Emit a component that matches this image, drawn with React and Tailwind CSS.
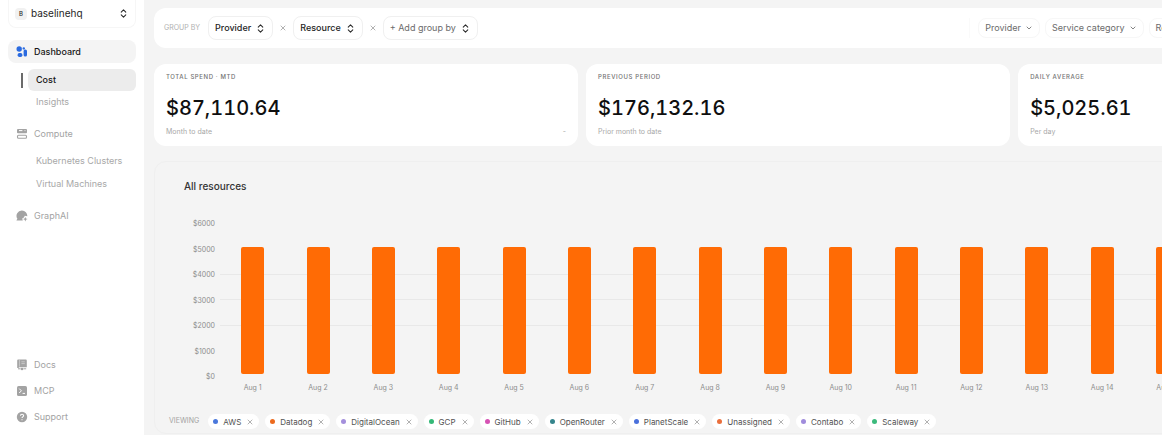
import React from "react";
import { ChevronDown, ChevronsUpDown, X } from "lucide-react";

const days = Array.from({ length: 18 }, (_, i) => ({ label: `Aug ${i + 1}`, spend: 5025.61 }));
const ticks = [6000, 5000, 4000, 3000, 2000, 1000, 0];

const stats = [
  { title: "Total spend · MTD", value: "$87,110.64", note: "Month to date", delta: "-" },
  { title: "Previous period", value: "$176,132.16", note: "Prior month to date" },
  { title: "Daily average", value: "$5,025.61", note: "Per day" },
];

const providers = [
  { name: "AWS", dot: "bg-[#4a78dc]" },
  { name: "Datadog", dot: "bg-[#ec6a1e]" },
  { name: "DigitalOcean", dot: "bg-[#a48fdc]" },
  { name: "GCP", dot: "bg-[#34b877]" },
  { name: "GitHub", dot: "bg-[#d652b4]" },
  { name: "OpenRouter", dot: "bg-[#35858c]" },
  { name: "PlanetScale", dot: "bg-[#4a70dc]" },
  { name: "Unassigned", dot: "bg-[#ea6f3c]" },
  { name: "Contabo", dot: "bg-[#a08cdc]" },
  { name: "Scaleway", dot: "bg-[#3cba7c]" },
];

function DashboardIcon() {
  return (
    <svg viewBox="0 0 12 12" className="size-3 shrink-0" fill="#2b6be0" aria-hidden="true">
      <circle cx="3.2" cy="3" r="2.7" />
      <rect x="6.6" y="1.2" width="2.4" height="2.4" rx="1.2" />
      <rect x="1.6" y="7" width="4.8" height="4" rx="1.8" />
      <rect x="7.6" y="3.4" width="3.4" height="7.2" rx="1.6" />
    </svg>
  );
}

function ComputeIcon() {
  return (
    <svg viewBox="0 0 12 12" className="size-3 shrink-0" aria-hidden="true">
      <rect x="1" y="1" width="10" height="4.2" rx="1" fill="#a3a3a3" />
      <path d="M3 2.6h3.4M8.6 2.6h.8" stroke="#fff" strokeWidth="1" />
      <rect x="1.5" y="7.2" width="9" height="3" rx="1" fill="none" stroke="#a3a3a3" strokeWidth="1.1" />
    </svg>
  );
}

function GraphIcon() {
  return (
    <svg viewBox="0 0 12 12" className="size-3 shrink-0" aria-hidden="true">
      <path d="M6 .6a5.3 5.3 0 0 1 5.3 5.6L8.8 5.8l-.9 1.7-1.7.9.6 2.2H.9c-.4 0-.5-.4-.3-.6l.8-1.2A5.3 5.3 0 0 1 6 .6z" fill="#a3a3a3" />
      <path d="M9.3 6.9l.7 1.5 1.6.7-1.6.7-.7 1.6-.7-1.6L7 9.1l1.6-.7z" fill="#a3a3a3" />
    </svg>
  );
}

function DocsIcon() {
  return (
    <svg viewBox="0 0 12 12" className="size-3 shrink-0" aria-hidden="true">
      <path d="M2.4.6h7.2c.8 0 1.2.4 1.2 1.2v6.4H3.6c-.7 0-1 .4-1 .8H1.2V1.8C1.2 1 1.6.6 2.4.6z" fill="#a3a3a3" />
      <path d="M3.4 1v6.6M5.4 2.8h3.4M5.4 4.6h3.4" stroke="#fff" strokeWidth=".4" />
      <path d="M2 9.8h2.6M7.4 9.8h2.8" stroke="#a3a3a3" strokeWidth="1" />
      <circle cx="6" cy="10" r="1.3" fill="#a3a3a3" />
    </svg>
  );
}

function TerminalIcon() {
  return (
    <svg viewBox="0 0 12 12" className="size-3 shrink-0" aria-hidden="true">
      <rect x="1" y="1" width="10" height="10" rx="1.6" fill="#a3a3a3" />
      <path d="M3.2 3.6l2.2 2.2-2.2 2.2M6.6 8.4h2.4" stroke="#fff" strokeWidth="1" fill="none" />
    </svg>
  );
}

function SupportIcon() {
  return (
    <svg viewBox="0 0 12 12" className="size-3 shrink-0" aria-hidden="true">
      <circle cx="6" cy="6" r="5.2" fill="#a3a3a3" />
      <path d="M4.5 4.8c0-2 3.1-2 3.1-.1 0 1.2-1.6 1.2-1.6 2.4M6 8.2v1.1" stroke="#fff" strokeWidth="1.1" fill="none" />
    </svg>
  );
}

function NavLink({ icon, children }) {
  return (
    <a href="#" className="flex h-6 items-center gap-1.5 px-2 text-[#a3a3a3]">
      {icon}
      {children}
    </a>
  );
}

function SubLink({ children }) {
  return (
    <a href="#" className="ml-5 flex h-[22px] items-center px-2 text-[#a8a8a8]">
      {children}
    </a>
  );
}

function Sidebar() {
  return (
    <aside className="flex w-36 shrink-0 flex-col bg-white px-2 text-[9px]">
      <button type="button" className="flex h-7 items-center gap-1 rounded-b-lg border border-t-0 border-[#f6f6f6] px-1.5 text-[10px] text-[#262626]">
        <span className="flex size-3 items-center justify-center rounded-sm bg-[#f1f1f1] text-[6px] font-medium">B</span>
        baselinehq
        <ChevronsUpDown className="ml-auto size-[11px]" strokeWidth={2.2} />
      </button>
      <nav className="mt-3 flex flex-col">
        <a href="#" className="flex h-[23px] items-center gap-1.5 rounded-lg bg-[#f4f4f4] px-2 font-medium text-[#171717]">
          <DashboardIcon />
          Dashboard
        </a>
        <div className="mt-1.5 flex items-center pl-[13px]">
          <span className="h-[15px] w-0.5 bg-[#6b6b6b]" />
          <a href="#" aria-current="page" className="ml-[5px] flex h-[22px] flex-1 items-center rounded-md bg-[#ececec] px-2 font-medium text-[#171717]">
            Cost
          </a>
        </div>
        <SubLink>Insights</SubLink>
        <div className="mt-[9px] flex flex-col">
          <NavLink icon={<ComputeIcon />}>Compute</NavLink>
          <div className="mt-1 flex flex-col gap-px">
            <SubLink>Kubernetes Clusters</SubLink>
            <SubLink>Virtual Machines</SubLink>
          </div>
        </div>
        <div className="mt-[9px] flex flex-col">
          <NavLink icon={<GraphIcon />}>GraphAI</NavLink>
        </div>
      </nav>
      <nav className="mt-auto flex flex-col gap-0.5 pb-1.5">
        <NavLink icon={<DocsIcon />}>Docs</NavLink>
        <NavLink icon={<TerminalIcon />}>MCP</NavLink>
        <NavLink icon={<SupportIcon />}>Support</NavLink>
      </nav>
    </aside>
  );
}

function GroupButton({ children, muted }) {
  return (
    <button
      type="button"
      className={
        "flex h-6 items-center gap-1 rounded-lg border border-[#f0f0f0] px-1.5 " +
        (muted ? "text-[#6b6b6b]" : "font-medium text-[#262626]")
      }
    >
      {children}
      <ChevronsUpDown className="size-[11px] text-[#262626]" strokeWidth={2.2} />
    </button>
  );
}

function RemoveButton({ name, className }) {
  return (
    <button type="button" aria-label={`Remove ${name}`} className={className}>
      <X className="size-2 text-[#8a8a8a]" strokeWidth={2} />
    </button>
  );
}

function FilterButton({ children }) {
  return (
    <button type="button" className="flex h-5 items-center gap-1 rounded-lg border border-[#f7f7f7] px-1.5 whitespace-nowrap">
      {children}
      <ChevronDown className="size-2" strokeWidth={2.5} />
    </button>
  );
}

function Toolbar() {
  return (
    <div className="flex h-10 items-center justify-between rounded-xl bg-white pl-2.5 text-[9px]">
      <div className="flex items-center">
        <span className="mr-2 text-[7px] text-[#b0b0b0]">GROUP BY</span>
        <GroupButton>Provider</GroupButton>
        <RemoveButton name="Provider" className="mx-1.5" />
        <GroupButton>Resource</GroupButton>
        <RemoveButton name="Resource" className="mx-1.5" />
        <GroupButton muted>+ Add group by</GroupButton>
      </div>
      <div className="flex w-[37%] items-center gap-[5px] border-l border-[#fafafa] pl-2 text-[#6b6b6b]">
        <FilterButton>Provider</FilterButton>
        <FilterButton>Service category</FilterButton>
        <FilterButton>Region</FilterButton>
      </div>
    </div>
  );
}

function StatCard({ title, value, note, delta }) {
  return (
    <section className="rounded-xl bg-white px-3 pt-2 pb-[9px]">
      <h2 className="text-[6px] leading-[10px] font-medium tracking-widest text-[#737373] uppercase">{title}</h2>
      <p className="mt-3 text-[20px] leading-7 font-medium text-[#0f0f0f] tabular-nums">{value}</p>
      <div className="mt-1 flex justify-between text-[7px] leading-[11px] text-[#a8a8a8]">
        <span>{note}</span>
        <span>{delta}</span>
      </div>
    </section>
  );
}

function Chart() {
  return (
    <div className="mt-[30px] mr-[31px] flex">
      <div className="-mt-1.5 flex h-[165px] w-[51px] flex-col justify-between pr-[5px] text-right text-[7px] leading-3 text-[#8c8c8c]">
        {ticks.map((t) => (
          <span key={t}>${t}</span>
        ))}
      </div>
      <div className="flex-1">
        <div className="grid h-[152px] grid-cols-1 grid-rows-1">
          <div className="col-start-1 row-start-1 flex flex-col justify-between">
            {ticks.map((t) => (
              <span key={t} className={t >= 2000 && t <= 4000 ? "h-px bg-[#e8e8e8]" : "h-px"} />
            ))}
          </div>
          <div className="col-start-1 row-start-1 -mt-0.5 mb-0.5 flex items-end">
            {days.map((d) => (
              <div key={d.label} className="flex h-full flex-1 items-end justify-center">
                <div className="w-[23px] rounded-xs bg-[#ff6b05]" style={{ height: `${(d.spend / 6000) * 100}%` }} />
              </div>
            ))}
          </div>
        </div>
        <div className="mt-1.5 flex text-[7px] leading-3 text-[#8c8c8c]">
          {days.map((d) => (
            <span key={d.label} className="flex-1 text-center">
              {d.label}
            </span>
          ))}
        </div>
      </div>
    </div>
  );
}

function Legend() {
  return (
    <div className="mt-5 flex items-center text-[8px] text-[#525252]">
      <span className="mr-[9px] text-[7px] text-[#a3a3a3]">VIEWING</span>
      <ul className="flex gap-1.5">
        {providers.map((p) => (
          <li key={p.name} className="flex h-[15px] items-center rounded-full bg-white px-[5px]">
            <span className={`mr-[5px] size-[5px] rounded-full ${p.dot}`} />
            {p.name}
            <RemoveButton name={p.name} className="ml-[5px]" />
          </li>
        ))}
      </ul>
    </div>
  );
}

export default function App() {
  return (
    <div className="flex min-h-screen bg-[#f4f4f4] font-['Inter','Liberation_Sans',sans-serif]">
      <Sidebar />
      <main className="min-w-0 flex-1 overflow-hidden pt-2 pl-2.5">
        <div className="w-[calc(128%-2px)]">
          <Toolbar />
          <div className="mt-4 grid grid-cols-3 gap-2">
            {stats.map((s) => (
              <StatCard key={s.title} {...s} />
            ))}
          </div>
          <section className="mt-[15px] rounded-xl border border-[#efefef] px-3.5 pt-4 pb-1">
            <h2 className="pl-[15px] text-[10px] leading-4 font-medium text-[#333333]">All resources</h2>
            <Chart />
            <Legend />
          </section>
        </div>
      </main>
    </div>
  );
}
